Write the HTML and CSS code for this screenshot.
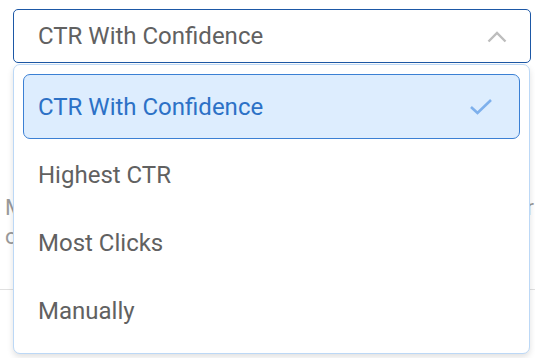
FILE: index.html
```html
<!DOCTYPE html>
<html lang="en">
<head>
    <meta charset="UTF-8">
    <meta name="viewport" content="width=device-width, initial-scale=1.0">
    <title>Winner Selection</title>
    <link rel="stylesheet" href="styles.css">
</head>
<body>
    <div class="page">
        <div class="select-wrap">
            <div class="select">
                <span class="select-value">CTR With Confidence</span>
                <svg class="chevron" width="20" height="13" viewBox="0 0 20 13">
                    <path d="M1.5 11.5 L10 3 L18.5 11.5" fill="none" stroke="#bdbdbd" stroke-width="2.4"/>
                </svg>
            </div>
            <ul class="menu">
                <li class="option selected">
                    <span>CTR With Confidence</span>
                    <svg class="check" width="24" height="18" viewBox="0 0 24 18">
                        <path d="M2 9 L8.5 15 L22 2" fill="none" stroke="#7eb0ec" stroke-width="2.6"/>
                    </svg>
                </li>
                <li class="option">Highest CTR</li>
                <li class="option">Most Clicks</li>
                <li class="option">Manually</li>
            </ul>
        </div>
        <p class="hint">
            <span class="hint-line full">Most Clicks picks the most clicked variant as winner</span>
            <span class="hint-line">once the test is over.</span>
        </p>
        <hr class="divider">
    </div>
</body>
</html>
```

FILE: styles.css
```css
body {
    margin: 0;
    background-color: #fff;
    font-family: Roboto, "Noto Sans", sans-serif;
}

.page {
    position: relative;
    width: 535px;
    height: 358px;
    overflow: hidden;
}

.select-wrap {
    position: relative;
    padding: 9px 4px 0 13px;
    z-index: 2;
}

.select {
    box-sizing: border-box;
    width: 518px;
    height: 54px;
    border: 1px solid #1d58a6;
    border-radius: 5px;
    display: flex;
    align-items: center;
    justify-content: space-between;
    padding: 0 23px 0 24px;
    background: #fff;
}

.select-value {
    font-size: 24px;
    color: #616161;
}

.chevron {
    display: block;
}

.menu {
    position: absolute;
    top: 64px;
    left: 13px;
    box-sizing: border-box;
    width: 517px;
    margin: 0;
    padding: 9px 9px 10px 9px;
    list-style: none;
    background: #fff;
    border: 1px solid #bcd8f6;
    border-radius: 7px;
    box-shadow: 0 3px 6px rgba(0, 0, 0, 0.12);
}

.option {
    box-sizing: border-box;
    height: 65px;
    margin-bottom: 3px;
    display: flex;
    align-items: center;
    justify-content: space-between;
    padding: 0 26px 0 14px;
    font-size: 24px;
    color: #616161;
    border: 1px solid transparent;
    border-radius: 7px;
}

.option:last-child {
    margin-bottom: 0;
}

.option.selected {
    background: #ddedfe;
    border-color: #3b80d4;
    color: #2c71c6;
}

.hint {
    position: absolute;
    top: 193px;
    left: 0;
    width: 535px;
    margin: 0;
    padding: 0 1px 0 5px;
    box-sizing: border-box;
    font-size: 22px;
    line-height: 29px;
    color: #9a9a9a;
}

.hint-line {
    display: block;
    white-space: nowrap;
}

.hint-line.full {
    text-align: justify;
    text-align-last: justify;
    white-space: normal;
}

.divider {
    position: absolute;
    top: 289px;
    left: 0;
    width: 535px;
    margin: 0;
    border: none;
    border-top: 1px solid #e0e0e0;
}
```
